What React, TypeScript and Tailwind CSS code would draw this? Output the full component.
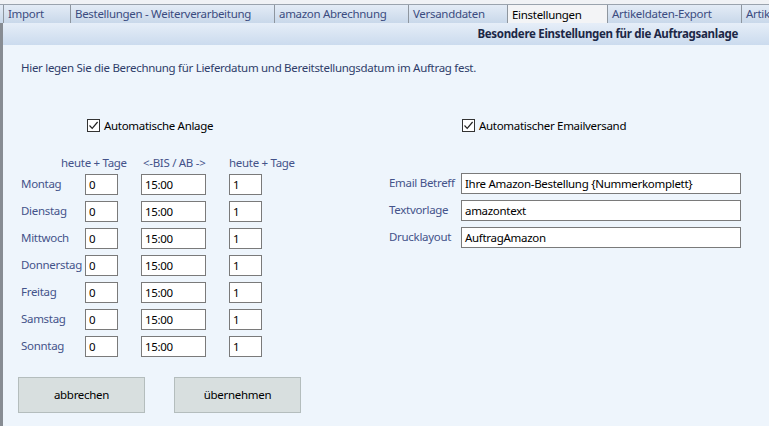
const tabs = [
  { label: "Import", w: "w-[67px]" },
  { label: "Bestellungen - Weiterverarbeitung", w: "w-[204px]" },
  { label: "amazon Abrechnung", w: "w-[134px]" },
  { label: "Versanddaten", w: "w-[99px]" },
  { label: "Einstellungen", w: "w-[100px]", active: true },
  { label: "Artikeldaten-Export", w: "w-[134px]" },
  { label: "Artik", w: "w-[28px]" },
];

const days = ["Montag", "Dienstag", "Mittwoch", "Donnerstag", "Freitag", "Samstag", "Sonntag"];

const mail = [
  { label: "Email Betreff", value: "Ihre Amazon-Bestellung {Nummerkomplett}" },
  { label: "Textvorlage", value: "amazontext" },
  { label: "Drucklayout", value: "AuftragAmazon" },
];

function Field({ value, className }: { value: string; className: string }) {
  return (
    <div className={`h-[21px] shrink-0 border border-[#7a7a7a] bg-white pl-[3px] leading-[19px] text-black ${className}`}>
      {value}
    </div>
  );
}

function Check({ label }: { label: string }) {
  return (
    <div className="flex items-center gap-[4px]">
      <div className="flex h-[13px] w-[13px] items-center justify-center border border-[#333] bg-white">
        <svg width="11" height="11" viewBox="0 0 11 11">
          <path d="M1.5 5.5 L4.2 8.3 L9.6 2" fill="none" stroke="#222" strokeWidth="1.2" />
        </svg>
      </div>
      <span className="text-black">{label}</span>
    </div>
  );
}

export default function App() {
  return (
    <main
      className="flex h-[426px] w-[769px] flex-col overflow-hidden bg-[#eef5fc] text-[11.5px] tracking-[-0.3px]"
      style={{ fontFamily: '"Noto Sans", "Open Sans", sans-serif' }}
    >
      {/* tab row */}
      <div className="h-[4px] bg-[#f0f2f5]" />
      <div className="flex h-[19px] border-t border-[#9aa3ad] bg-gradient-to-b from-[#e4ecf6] to-[#c9d8ea] pl-[3px]">
        {tabs.map((t) => (
          <div
            key={t.label}
            className={`${t.w} shrink-0 overflow-hidden whitespace-nowrap border-l border-[#8e969f] pl-[4px] leading-[18px] ${
              t.active ? "bg-[#f3f4f6] pt-[1px] text-black" : "text-[#3b4c80]"
            }`}
          >
            {t.label}
          </div>
        ))}
      </div>

      <div className="flex flex-1">
        <div className="w-[3px] bg-[#878c93]" />
        <div className="flex flex-1 flex-col">
          {/* header */}
          <div className="flex h-[22px] items-center justify-end bg-gradient-to-b from-[#e6eef8] to-[#cbdbee] pr-[31px] font-bold text-[#1c2746]">
            Besondere Einstellungen für die Auftragsanlage
          </div>

          <div className="pl-[18px] pt-[14px] text-[#2f3d6a]">
            Hier legen Sie die Berechnung für Lieferdatum und Bereitstellungsdatum im Auftrag fest.
          </div>

          <div className="flex pt-[41px]">
            {/* left block */}
            <div className="w-[368px] pl-[18px] text-[#44538a]">
              <div className="pl-[66px]">
                <Check label="Automatische Anlage" />
              </div>
              <div className="mt-[20px] flex h-[15px] items-center whitespace-nowrap leading-[15px]">
                <div className="w-[122px] pl-[40px]">heute + Tage</div>
                <div className="w-[86px]">&lt;-BIS / AB -&gt;</div>
                <div>heute + Tage</div>
              </div>
              <div className="mt-[4px] flex flex-col gap-[6px]">
                {days.map((d) => (
                  <div key={d} className="flex h-[21px] items-center">
                    <div className="w-[64px] shrink-0 whitespace-nowrap">{d}</div>
                    <Field value="0" className="w-[33px]" />
                    <Field value="15:00" className="ml-[23px] w-[65px]" />
                    <Field value="1" className="ml-[23px] w-[33px]" />
                  </div>
                ))}
              </div>
            </div>

            {/* right block */}
            <div className="flex-1 pl-[18px]">
              <div className="pl-[73px]">
                <Check label="Automatischer Emailversand" />
              </div>
              <div className="mt-[38px] flex flex-col gap-[6px]">
                {mail.map((m) => (
                  <div key={m.label} className="flex h-[21px] items-center">
                    <div className="w-[72px] shrink-0 whitespace-nowrap text-[#44538a]">{m.label}</div>
                    <Field value={m.value} className="w-[280px]" />
                  </div>
                ))}
              </div>
            </div>
          </div>

          {/* buttons */}
          <div className="flex gap-[29px] pl-[15px] pt-[20px]">
            <button className="h-[36px] w-[127px] border border-[#b4bdbd] bg-[#d8dfdf] text-black">abbrechen</button>
            <button className="h-[36px] w-[127px] border border-[#b4bdbd] bg-[#d8dfdf] text-black">übernehmen</button>
          </div>
        </div>
      </div>
    </main>
  );
}
